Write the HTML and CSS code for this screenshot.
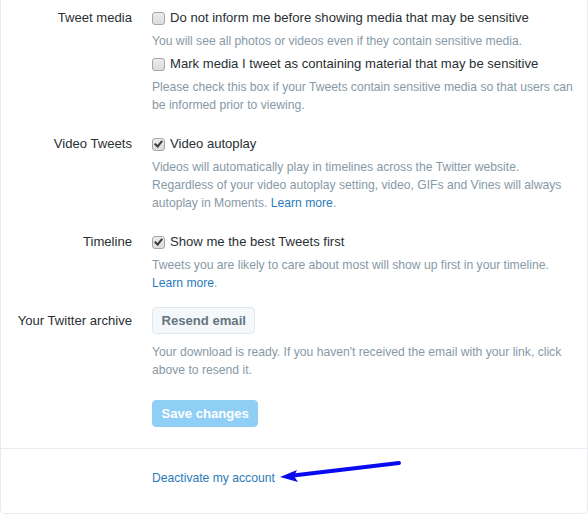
FILE: index.html
```html
<!DOCTYPE html>
<html lang="en">
<head>
<meta charset="utf-8">
<title>Settings</title>
<link rel="stylesheet" href="styles.css">
</head>
<body>
<div class="card">
  <div class="form">
    <div class="row">
      <div class="label">Tweet media</div>
      <div class="controls">
        <div class="option"><span class="box"></span><span>Do not inform me before showing media that may be sensitive</span></div>
        <p class="help">You will see all photos or videos even if they contain sensitive media.</p>
        <div class="option option--next"><span class="box"></span><span>Mark media I tweet as containing material that may be sensitive</span></div>
        <p class="help">Please check this box if your Tweets contain sensitive media so that users can be informed prior to viewing.</p>
      </div>
    </div>
    <div class="row">
      <div class="label">Video Tweets</div>
      <div class="controls">
        <div class="option"><span class="box box--checked"></span><span>Video autoplay</span></div>
        <p class="help">Videos will automatically play in timelines across the Twitter website. Regardless of your video autoplay setting, video, GIFs and Vines will always autoplay in Moments. <a class="link" href="#">Learn more</a>.</p>
      </div>
    </div>
    <div class="row row--close">
      <div class="label">Timeline</div>
      <div class="controls">
        <div class="option"><span class="box box--checked"></span><span>Show me the best Tweets first</span></div>
        <p class="help">Tweets you are likely to care about most will show up first in your timeline. <a class="link" href="#">Learn more</a>.</p>
      </div>
    </div>
    <div class="row">
      <div class="label label--button">Your Twitter archive</div>
      <div class="controls">
        <button class="btn" type="button">Resend email</button>
        <p class="help help--after-btn">Your download is ready. If you haven't received the email with your link, click above to resend it.</p>
        <button class="btn btn--primary" type="button">Save changes</button>
      </div>
    </div>
  </div>
  <div class="footer">
    <a class="link" href="#">Deactivate my account</a>
  </div>
  <svg class="arrow" width="126" height="26" viewBox="0 0 126 26" aria-hidden="true">
    <line x1="122" y1="6" x2="12" y2="19" stroke="#0a0af0" stroke-width="4" stroke-linecap="round"/>
    <polygon points="3,20 20,13 17,19 21,25" fill="#0a0af0"/>
  </svg>
</div>
</body>
</html>
```

FILE: styles.css
```css
html, body {
  margin: 0;
  padding: 0;
  background: #ffffff;
}

body {
  font-family: "Liberation Sans", Arial, sans-serif;
  color: #292f33;
  font-size: 13.1px;
  line-height: 18px;
}

.card {
  position: relative;
  width: 586px;
  height: 513px;
  box-sizing: content-box;
  border: 1px solid #e6ecf0;
  border-top: none;
  border-radius: 0 0 5px 5px;
  background: #ffffff;
}

.form {
  padding: 9px 8px 0 0;
}

.row {
  display: grid;
  grid-template-columns: 131px 1fr;
  column-gap: 20px;
  margin-bottom: 21px;
}

.row--close {
  margin-bottom: 15px;
}

.label {
  text-align: right;
  color: #292f33;
}

.label--button {
  padding-top: 5px;
}

.option {
  display: flex;
  align-items: center;
  gap: 5px;
  color: #292f33;
}

.option--next {
  margin-top: 5px;
}

.box {
  position: relative;
  flex: none;
  width: 11px;
  height: 11px;
  border: 1px solid #a6a6a6;
  border-radius: 3px;
  background: linear-gradient(#ececec, #dcdcdc);
}

.box--checked::after {
  content: "";
  position: absolute;
  left: 3px;
  top: 0px;
  width: 3px;
  height: 6px;
  border: solid #3a3a3a;
  border-width: 0 2px 2px 0;
  transform: rotate(40deg);
}

.help {
  margin: 5px 0 0;
  font-size: 12.15px;
  line-height: 18px;
  color: #8899a6;
}

.help--after-btn {
  margin-top: 9px;
}

.link {
  color: #2b7bb9;
  text-decoration: none;
}

.btn {
  display: block;
  height: 27px;
  padding: 0 8.5px;
  font-family: "Liberation Sans", Arial, sans-serif;
  font-size: 13.1px;
  font-weight: bold;
  line-height: 25px;
  color: #66757f;
  background: #f5f8fa;
  border: 1px solid #e1e8ed;
  border-radius: 4px;
}

.btn--primary {
  margin-top: 21px;
  color: #ffffff;
  background: #8fcff5;
  border-color: #8fcff5;
}

.footer {
  margin-top: 20px;
  border-top: 1px solid #e6ecf0;
  padding: 20px 0 0 151px;
  font-size: 12.15px;
  line-height: 18px;
}

.arrow {
  position: absolute;
  left: 276px;
  top: 457px;
}
```
